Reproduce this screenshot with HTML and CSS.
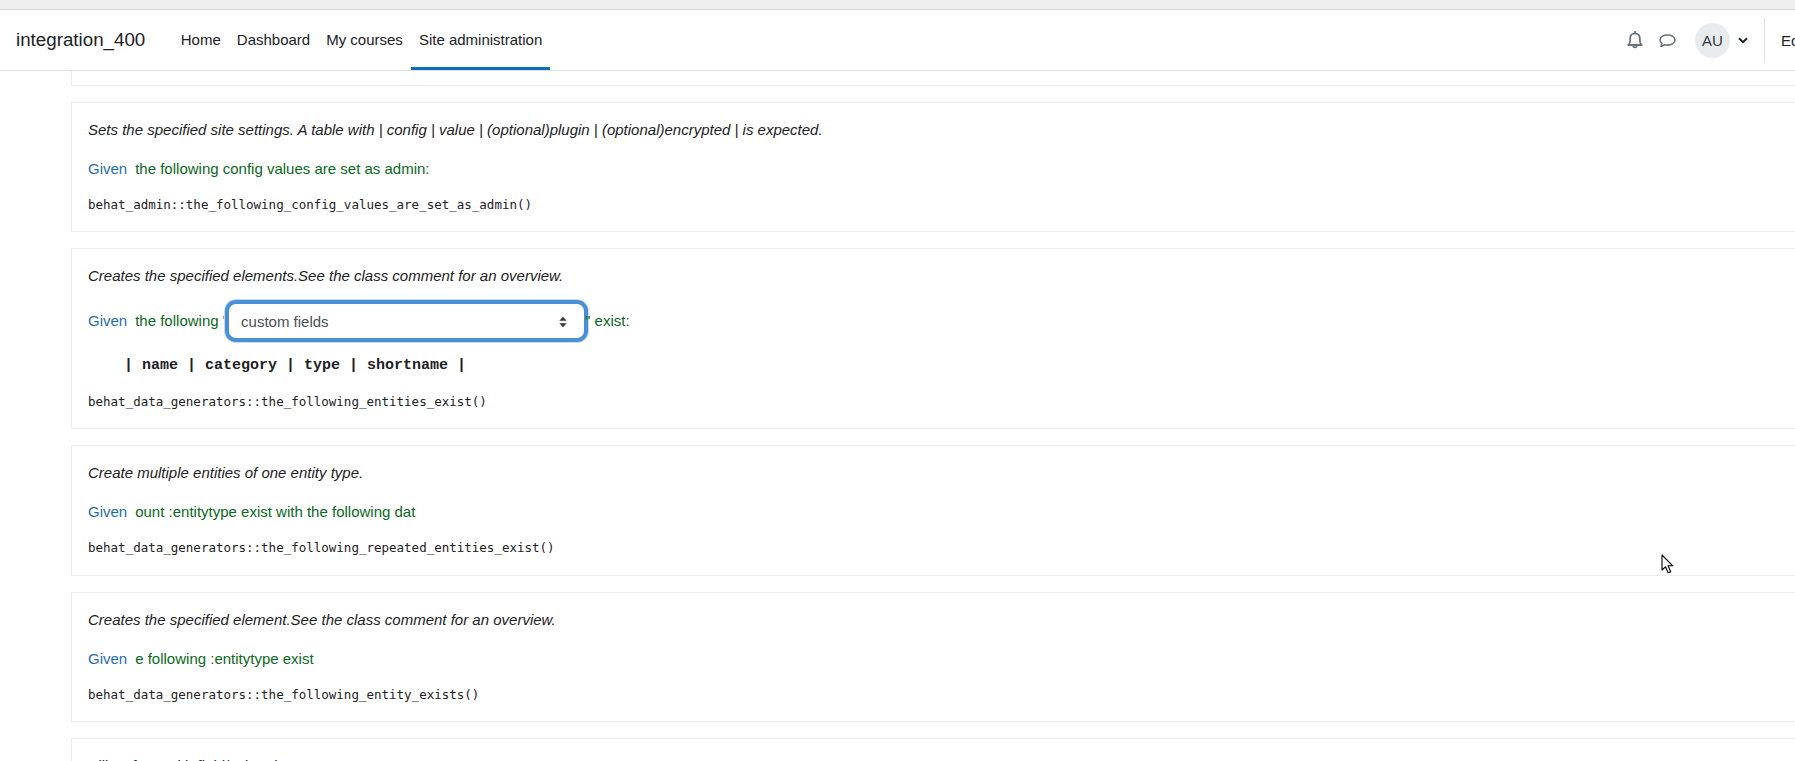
FILE: index.html
```html
<!DOCTYPE html>
<html lang="en">
<head>
<meta charset="utf-8">
<title>integration_400</title>
<link rel="stylesheet" href="styles.css">
</head>
<body>
<div class="topstrip"></div>
<nav class="navbar">
  <span class="brand">integration_400</span>
  <ul class="menu">
    <li class="menu-item">Home</li>
    <li class="menu-item">Dashboard</li>
    <li class="menu-item">My courses</li>
    <li class="menu-item active">Site administration</li>
  </ul>
  <div class="usernav">
    <svg class="icon bell" width="16" height="18" viewBox="0 0 16 18" fill="none" stroke="#6a737b" stroke-width="1.8"><path d="M1.2 14h13.6c-1.4-1.2-2-2.400-2-4.800V7.200c0-2.800-2-4.800-4.800-4.800S3.200 4.400 3.200 7.200v2c0 2.400-.6 3.600-2 4.800z" stroke-linejoin="round"/><path d="M8 .8v1.600M6.400 15.800c.5.700 2.700.700 3.200 0" stroke-linecap="round"/></svg>
    <svg class="icon chat" width="17" height="16" viewBox="0 0 17 16" fill="none" stroke="#6a737b" stroke-width="1.600"><path d="M8.500 2C4.400 2 1 4 1 6.900c0 1.400.8 2.600 2 3.500-.1 1.200-.6 2.200-1.100 3 1.500-.2 2.800-.9 3.500-1.700 1 .3 2 .4 3.100.4 4.100 0 7.500-2.300 7.500-5.200S12.600 2 8.500 2z" stroke-linejoin="round"/></svg>
    <span class="avatar">AU</span>
    <svg class="caret" width="10" height="7" viewBox="0 0 10 7" fill="none" stroke="#1d2125" stroke-width="2"><path d="M1 1.200l4 4 4-4"/></svg>
    <span class="divider"></span>
    <span class="edit">Edit mode</span>
  </div>
</nav>
<main class="content">
  <section class="step stub"></section>
  <section class="step">
    <p class="desc">Sets the specified site settings. A table with | config | value | (optional)plugin | (optional)encrypted | is expected.</p>
    <p class="line"><span class="kw">Given</span><span class="txt">the following config values are set as admin:</span></p>
    <p class="fn">behat_admin::the_following_config_values_are_set_as_admin()</p>
  </section>
  <section class="step">
    <p class="desc">Creates the specified elements.See the class comment for an overview.</p>
    <p class="line picker"><span class="kw">Given</span><span class="txt">the following "</span><span class="select">custom fields<svg class="updown" width="8" height="12" viewBox="0 0 8 12" fill="#343a40"><path d="M4 .8l3.700 4H.3zM4 11.200l3.700-4H.3z"/></svg></span><span class="txt">" exist:</span></p>
    <pre class="table">| name | category | type | shortname |</pre>
    <p class="fn fn-after-table">behat_data_generators::the_following_entities_exist()</p>
  </section>
  <section class="step">
    <p class="desc">Create multiple entities of one entity type.</p>
    <p class="line"><span class="kw">Given</span><span class="txt">ount :entitytype exist with the following dat</span></p>
    <p class="fn">behat_data_generators::the_following_repeated_entities_exist()</p>
  </section>
  <section class="step">
    <p class="desc">Creates the specified element.See the class comment for an overview.</p>
    <p class="line"><span class="kw">Given</span><span class="txt">e following :entitytype exist</span></p>
    <p class="fn">behat_data_generators::the_following_entity_exists()</p>
  </section>
  <section class="step">
    <p class="desc">Fills a form with field/value data.</p>
  </section>
</main>
<svg class="cursor" width="14" height="21" viewBox="0 0 14 21"><path d="M1 1v15l3.500-3.200 2.600 6 2.600-1.100-2.600-5.900h4.700z" fill="#fff" stroke="#000" stroke-width="1.100" stroke-linejoin="round"/></svg>
</body>
</html>
```
FILE: styles.css
```css
* { box-sizing: border-box; }
html, body { margin: 0; height: 761px; overflow: hidden; }
body {
  background: #fff;
  font-family: "Liberation Sans", Arial, sans-serif;
  font-size: 15px;
  color: #1d2125;
  position: relative;
}
.topstrip { height: 10px; background: #efefef; border-bottom: 1px solid #d2d2d2; }
.navbar {
  height: 61px;
  display: flex;
  align-items: stretch;
  padding-left: 16px;
  background: #fff;
  border-bottom: 1px solid #dee2e6;
  white-space: nowrap;
}
.brand { font-size: 18.750px; line-height: 60px; margin-right: 27.500px; }
.menu { display: flex; list-style: none; margin: 0; padding: 0; }
.menu-item { padding: 0 8px; line-height: 60px; height: 60px; }
.menu-item.active { border-bottom: 3px solid #0f6cbf; }
.usernav { margin-left: auto; display: flex; align-items: center; height: 60px; width: 168px; flex: none; }
.icon { display: block; flex: none; }
.bell { margin-right: 16px; }
.chat { margin-right: 19px; margin-top: 2px; }
.avatar {
  width: 35px; height: 35px; border-radius: 50%;
  background: #e9ecef; display: flex; align-items: center; justify-content: center;
  flex: none; color: #343a40;
}
.caret { margin-left: 8px; flex: none; }
.divider { width: 1px; height: 45px; background: #dee2e6; margin-left: 16px; flex: none; }
.edit { margin-left: 16px; }
.content { padding-left: 71px; margin-right: -40px; }
.step {
  border: 1px solid #e9ecef;
  padding: 16px;
  margin-bottom: 16px;
}
.stub { height: 14.750px; padding: 0; border-top: 0; }
.desc { margin: 0; font-style: italic; line-height: 22.500px; color: #1d2125; }
.line { margin: 16.500px 0 0; line-height: 22.500px; display: flex; align-items: center; }
.kw { color: #1f6db0; margin-right: 8px; }
.txt { color: #0a6a1c; white-space: pre; }
.fn {
  margin: 14.500px 0 0.500px;
  font-family: "DejaVu Sans Mono", monospace;
  font-size: 12.500px;
  line-height: 20px;
  color: #1d2125;
}
.fn-after-table { margin: 16.250px 0 0; }
.picker { height: 43px; margin-top: 12px; }
.select {
  width: 363px;
  height: 42px;
  margin: 0 -3px 0 -3px;
  padding: 2px 17px 0 12px;
  display: flex;
  align-items: center;
  justify-content: space-between;
  border: 4px solid #4a90d2;
  border-radius: 11px;
  background: #fff;
  color: #495057;
  flex: none;
  box-shadow: 0 0 0 1px #c4dcf2;
}
.table {
  margin: 13px 0 0 36px;
  font-family: "Liberation Mono", monospace;
  font-weight: bold;
  font-size: 15px;
  line-height: 20px;
  color: #1d2125;
}
.cursor { position: absolute; left: 1661px; top: 554px; }
```
